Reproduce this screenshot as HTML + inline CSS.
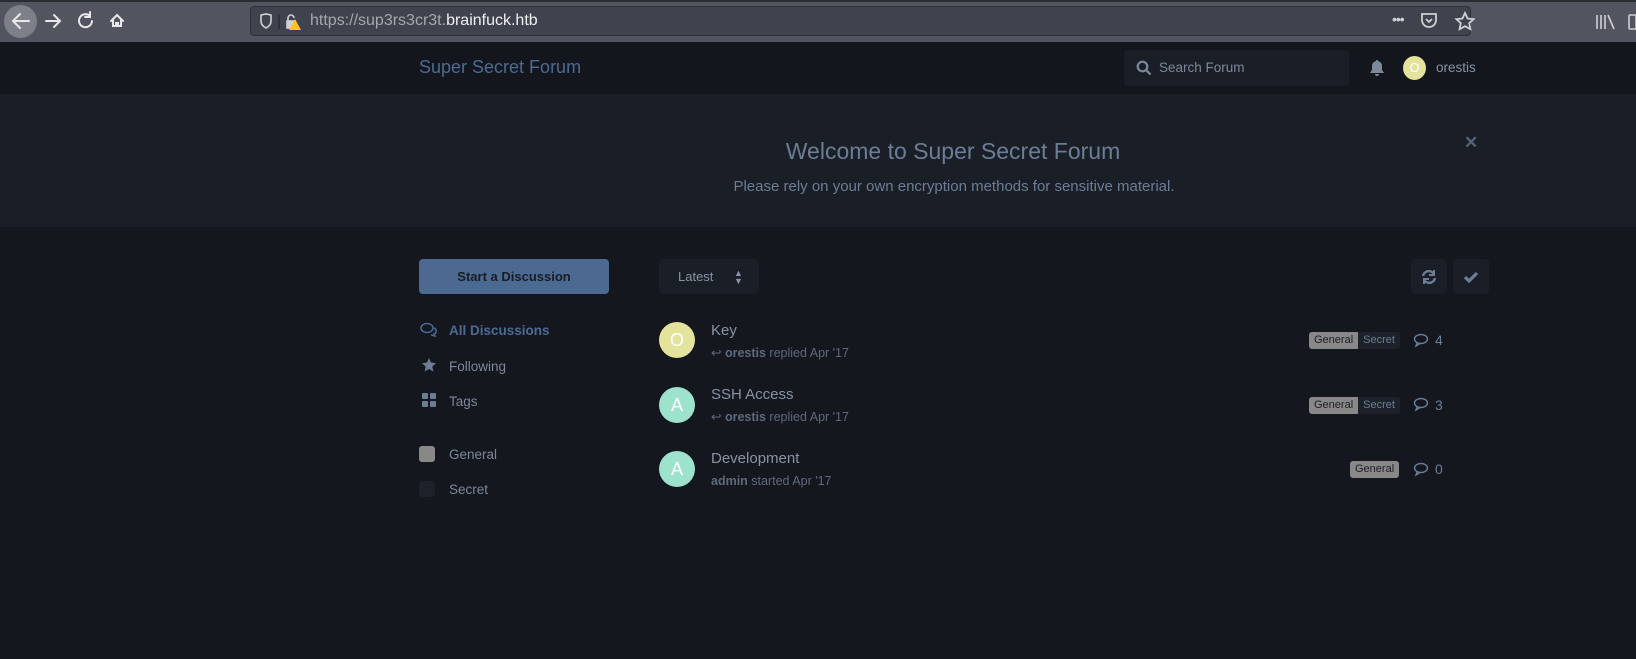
<!DOCTYPE html>
<html><head><meta charset="utf-8"><style>
*{margin:0;padding:0;box-sizing:border-box}
body{width:1636px;height:659px;overflow:hidden;background:#14171e;font-family:"Liberation Sans",sans-serif;position:relative;color:#7d8899}
.a{position:absolute}
#tb{left:0;top:0;width:1636px;height:42px;background:#52555f;border-top:2px solid #2a2c33}
#url{left:250px;top:6px;width:1221px;height:30px;background:#3f434d;border:1px solid #2e3139;border-radius:4px}
#nav{left:0;top:42px;width:1636px;height:52px;background:#13161d}
#ban{left:0;top:94px;width:1636px;height:133px;background:#1a1e26}
.t{white-space:nowrap}
.av{width:36px;height:36px;border-radius:50%;color:#fff;font-size:18px;text-align:center;line-height:36px}
.tag{font-size:11px;height:17px;line-height:17px;padding:0 5px;border-radius:3px}
</style></head><body>
<div id="tb" class="a"></div>
<div class="a" style="left:4px;top:5px;width:33px;height:33px;border-radius:50%;background:#7d8089"></div>
<svg class="a" style="left:0;top:0" width="140" height="44" fill="none" stroke="#e8e8ea" stroke-width="2" stroke-linecap="round">
<path d="M29 21H13M20 14l-7 7 7 7"/><path d="M46 21h14M54 15l6 6-6 6"/>
<path d="M90 16a6.5 6.5 0 1 0 2 5M90 12v5h-5"/>
<path d="M111 21l6-6 6 6M113 19v7h8v-7M116 26v-3h2v3"/></svg>
<div id="url" class="a"></div>
<svg class="a" style="left:258px;top:12px" width="40" height="20" fill="none" stroke="#cfd0d4" stroke-width="1.6"><path d="M3 3l5-1 5 1v6c0 4-3 6-5 7-2-1-5-3-5-7z"/><path d="M21 3v14" stroke="#2b2e35"/><rect x="29" y="9" width="8" height="7" fill="#cfd0d4"/><path d="M30 9V6a3 3 0 0 1 6 0"/></svg>
<svg class="a" style="left:289px;top:19px" width="12" height="12"><path d="M6 0L12 11H0z" fill="#ffc021"/></svg>
<div class="a t" style="left:310px;top:12px;font-size:16px;color:#a6a8ae">https://sup3rs3cr3t.<span style="color:#f0f0f2">brainfuck.htb</span></div>
<div class="a t" style="left:1392px;top:11px;font-size:14px;color:#cfd0d4;letter-spacing:-1px">•••</div>
<svg class="a" style="left:1420px;top:11px" width="60" height="22" fill="none" stroke="#cfd0d4" stroke-width="1.8"><path d="M2 3h14v6a7 7 0 0 1-14 0z"/><path d="M6 8l3 3 3-3"/><path d="M45 2l2.6 5.5 6 .7-4.4 4 1.2 6-5.4-3-5.4 3 1.2-6-4.4-4 6-.7z"/></svg>
<svg class="a" style="left:1595px;top:12px" width="41" height="20" fill="none" stroke="#cfd0d4" stroke-width="1.6"><path d="M2 3v14M6 3v14M10 3v14M13 3l6 14"/><rect x="34" y="3" width="7" height="14" rx="1"/></svg>
<div id="nav" class="a"></div>
<div class="a t" style="left:419px;top:57px;font-size:18px;color:#4d6a92">Super Secret Forum</div>
<div class="a" style="left:1124px;top:50px;width:225px;height:36px;background:#1a1e26;border-radius:4px"></div>
<svg class="a" style="left:1136px;top:60px" width="16" height="16" fill="none" stroke="#7d8899" stroke-width="2.2"><circle cx="6.5" cy="6.5" r="4.8"/><path d="M10 10l4.5 4.5"/></svg>
<div class="a t" style="left:1159px;top:60px;font-size:13.5px;color:#7d8899">Search Forum</div>
<svg class="a" style="left:1369px;top:59px" width="16" height="18" fill="#7d8899"><path d="M8 1a1.3 1.3 0 0 1 1.3 1.3A5 5 0 0 1 13 7v4l2 3H1l2-3V7a5 5 0 0 1 3.7-4.7A1.3 1.3 0 0 1 8 1zM6 15h4a2 2 0 0 1-4 0z"/></svg>
<div class="a av" style="left:1403px;top:56px;width:23px;height:24px;line-height:24px;font-size:13px;background:#e4e39c">O</div>
<div class="a t" style="left:1436px;top:60px;font-size:13.5px;color:#8893a4">orestis</div>
<div id="ban" class="a"></div>
<div class="a t" style="left:0;width:1906px;text-align:center;top:138px;font-size:23px;color:#6c7d95">Welcome to Super Secret Forum</div>
<div class="a t" style="left:0;width:1908px;text-align:center;top:178px;font-size:15px;color:#6c7d95">Please rely on your own encryption methods for sensitive material.</div>
<div class="a t" style="left:1464px;top:133px;font-size:17px;font-weight:bold;color:#566275">✕</div>
<div class="a" style="left:419px;top:259px;width:190px;height:35px;background:#4c6a91;border-radius:4px;color:#181c24;font-size:13px;font-weight:bold;text-align:center;line-height:35px">Start a Discussion</div>
<div class="a" style="left:659px;top:259px;width:100px;height:35px;background:#1a1e26;border-radius:4px;color:#8893a4;font-size:13px;line-height:35px;padding-left:19px">Latest <span style="position:absolute;left:75px;top:0;font-size:9px;line-height:8px;top:10px;color:#8893a4">▲<br>▼</span></div>
<div class="a" style="left:1411px;top:259px;width:36px;height:35px;background:#1a1e26;border-radius:4px"></div>
<div class="a" style="left:1453px;top:259px;width:36px;height:35px;background:#1a1e26;border-radius:4px"></div>
<svg class="a" style="left:1420px;top:268px" width="18" height="18" fill="none" stroke="#6c7d95" stroke-width="2.4"><path d="M3 8a6 6 0 0 1 11-2M15 10a6 6 0 0 1-11 2"/><path d="M14 2v5h-5M4 16v-5h5" stroke-width="2"/></svg>
<svg class="a" style="left:1462px;top:268px" width="18" height="18" fill="none" stroke="#6c7d95" stroke-width="3.2"><path d="M3 9l4 4 8-8"/></svg>
<svg class="a" style="left:420px;top:322px" width="18" height="16" fill="none" stroke="#4d6a92" stroke-width="1.5"><ellipse cx="7" cy="6" rx="6" ry="4.5"/><path d="M14 6c3 1 3 5 0 6l1 2-4-1"/></svg>
<div class="a t" style="left:449px;top:323px;font-size:13.5px;font-weight:bold;color:#4d6a92">All Discussions</div>
<svg class="a" style="left:421px;top:357px" width="16" height="16" fill="#6c7d95"><path d="M8 1l2.1 4.6 5 .5-3.8 3.4 1.1 5L8 12 3.6 14.5l1.1-5L.9 6.1l5-.5z"/></svg>
<div class="a t" style="left:449px;top:359px;font-size:13.5px;color:#7d8899">Following</div>
<svg class="a" style="left:422px;top:393px" width="14" height="14" fill="#6c7d95"><rect width="6" height="6" rx="1"/><rect x="8" width="6" height="6" rx="1"/><rect y="8" width="6" height="6" rx="1"/><rect x="8" y="8" width="6" height="6" rx="1"/></svg>
<div class="a t" style="left:449px;top:394px;font-size:13.5px;color:#7d8899">Tags</div>
<div class="a" style="left:419px;top:446px;width:16px;height:16px;border-radius:3px;background:#888"></div>
<div class="a t" style="left:449px;top:447px;font-size:13.5px;color:#7d8899">General</div>
<div class="a" style="left:419px;top:481px;width:16px;height:16px;border-radius:3px;background:#1d212a"></div>
<div class="a t" style="left:449px;top:482px;font-size:13.5px;color:#7d8899">Secret</div>

<div class="a av" style="left:659px;top:322px;background:#e4e39c">O</div>
<div class="a t" style="left:711px;top:322px;font-size:15px;color:#8893a4">Key</div>
<div class="a t" style="left:711px;top:345px;font-size:12.5px;color:#5e6a7c">↩ <b>orestis</b> replied Apr '17</div>
<div class="a av" style="left:659px;top:387px;background:#9de2cc">A</div>
<div class="a t" style="left:711px;top:386px;font-size:15px;color:#8893a4">SSH Access</div>
<div class="a t" style="left:711px;top:409px;font-size:12.5px;color:#5e6a7c">↩ <b>orestis</b> replied Apr '17</div>
<div class="a av" style="left:659px;top:451px;background:#9de2cc">A</div>
<div class="a t" style="left:711px;top:450px;font-size:15px;color:#8893a4">Development</div>
<div class="a t" style="left:711px;top:474px;font-size:12.5px;color:#5e6a7c"><b>admin</b> started Apr '17</div>

<div class="a" style="left:1309px;top:332px;display:flex"><span class="tag" style="background:#888;color:#1a1e26;border-radius:3px 0 0 3px">General</span><span class="tag" style="background:#1d212a;color:#6c7d95;border-radius:0 3px 3px 0">Secret</span></div>
<div class="a" style="left:1309px;top:397px;display:flex"><span class="tag" style="background:#888;color:#1a1e26;border-radius:3px 0 0 3px">General</span><span class="tag" style="background:#1d212a;color:#6c7d95;border-radius:0 3px 3px 0">Secret</span></div>
<div class="a" style="left:1350px;top:461px;display:flex"><span class="tag" style="background:#888;color:#1a1e26">General</span></div>
<svg class="a" style="left:1413px;top:333px" width="16" height="15" fill="none" stroke="#6c7d95" stroke-width="1.4"><ellipse cx="8" cy="6" rx="6.5" ry="4.5"/><path d="M4 10l-1 3 4-2.5"/></svg>
<svg class="a" style="left:1413px;top:397px" width="16" height="15" fill="none" stroke="#6c7d95" stroke-width="1.4"><ellipse cx="8" cy="6" rx="6.5" ry="4.5"/><path d="M4 10l-1 3 4-2.5"/></svg>
<svg class="a" style="left:1413px;top:462px" width="16" height="15" fill="none" stroke="#6c7d95" stroke-width="1.4"><ellipse cx="8" cy="6" rx="6.5" ry="4.5"/><path d="M4 10l-1 3 4-2.5"/></svg>
<div class="a t" style="left:1435px;top:332px;font-size:14px;color:#6c7d95">4</div>
<div class="a t" style="left:1435px;top:397px;font-size:14px;color:#6c7d95">3</div>
<div class="a t" style="left:1435px;top:461px;font-size:14px;color:#6c7d95">0</div>
</body></html>
